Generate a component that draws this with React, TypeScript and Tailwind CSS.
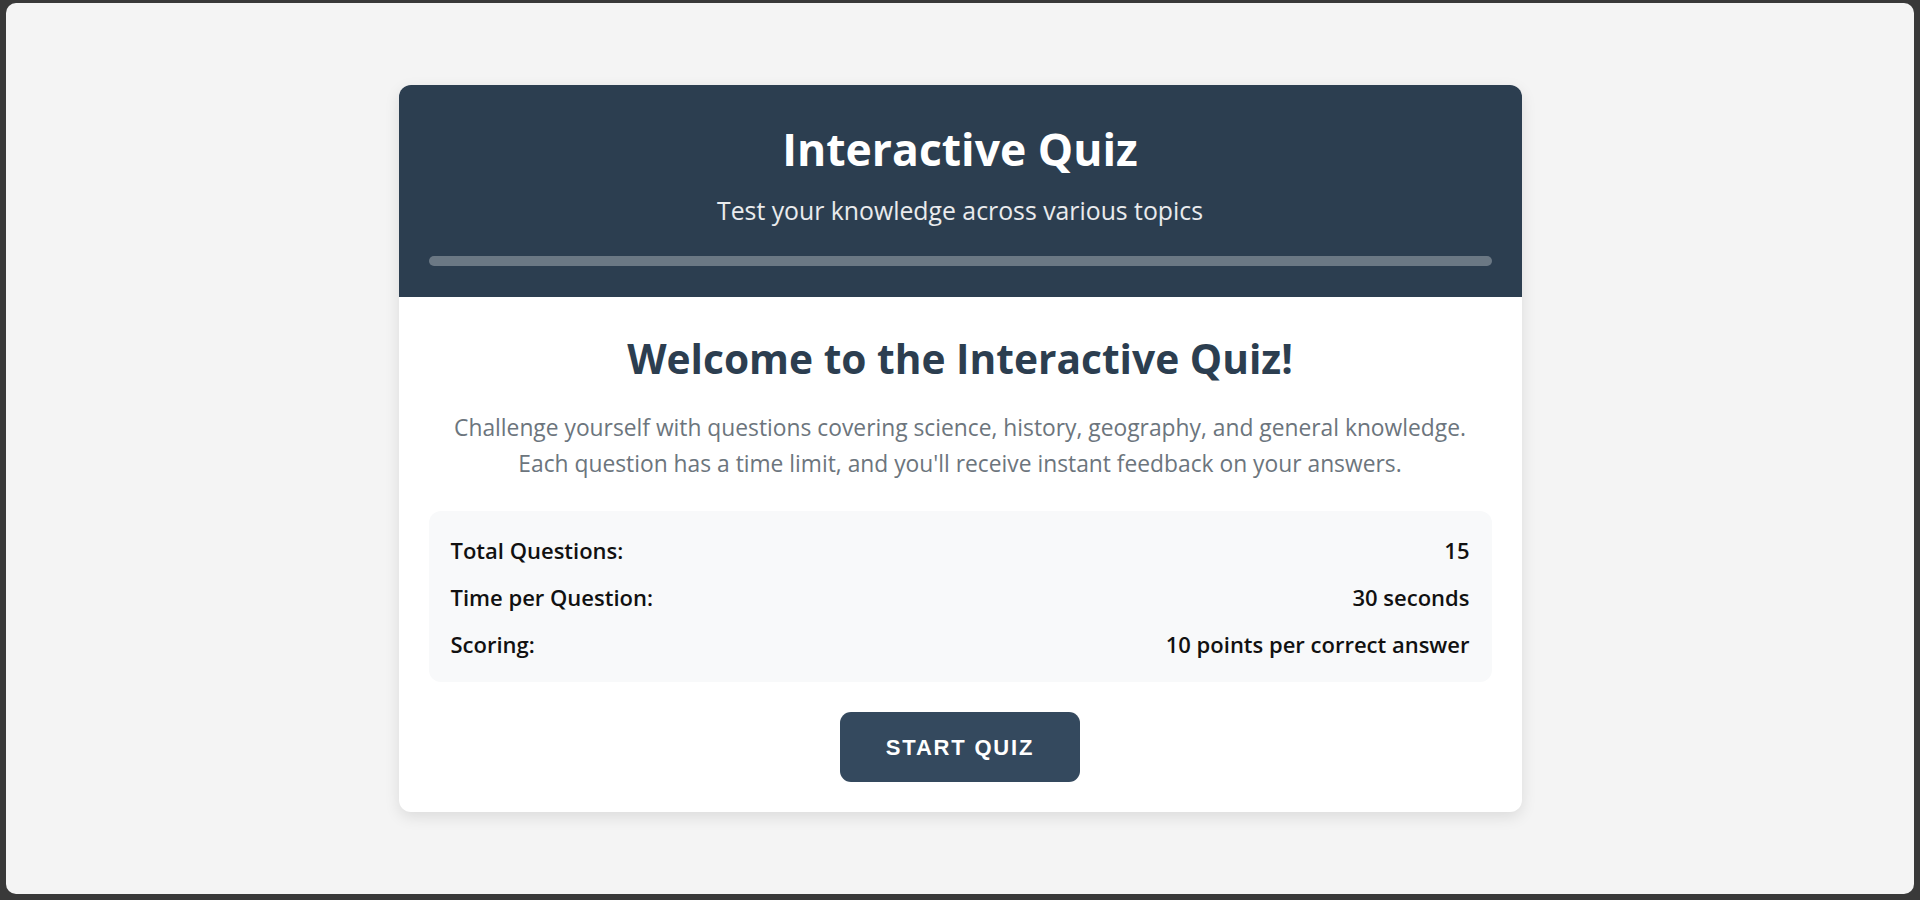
const infoRows = [
  { label: "Total Questions:", value: "15" },
  { label: "Time per Question:", value: "30 seconds" },
  { label: "Scoring:", value: "10 points per correct answer" },
];

export default function App() {
  return (
    <div className="h-[900px] bg-[#393939] pt-[3px] px-[6px] pb-[6px] font-['Open_Sans',sans-serif]">
      <div className="h-full rounded-[10px] bg-[#f4f4f4] flex items-center justify-center">
        <div className="w-[1123px] rounded-[12px] overflow-hidden bg-white shadow-[0_5px_15px_rgba(0,0,0,0.1)]">
          <div className="bg-[#2c3e50] px-[30px] pt-[31px] pb-[31px] text-center">
            <h1 className="text-[44.5px] leading-[66px] font-bold text-white">Interactive Quiz</h1>
            <p className="mt-[13px] text-[24.8px] leading-[30px] text-white/90">
              Test your knowledge across various topics
            </p>
            <div className="mt-[31px] h-[10px] rounded-full bg-white/30" />
          </div>

          <div className="px-[30px] pt-[32px] pb-[30px] flex flex-col items-center">
            <h2 className="text-[40.7px] leading-[58px] font-bold text-[#2c3e50]">
              Welcome to the Interactive Quiz!
            </h2>
            <p className="mt-[23px] text-center text-[22.8px] leading-[36px] text-[#6c757d]">
              Challenge yourself with questions covering science, history, geography, and general knowledge.
              <br />
              Each question has a time limit, and you'll receive instant feedback on your answers.
            </p>

            <div className="mt-[29px] w-full rounded-[12px] bg-[#f8f9fa] px-[22px] pt-[24px] pb-[23px] flex flex-col gap-[17px]">
              {infoRows.map((row) => (
                <div key={row.label} className="flex justify-between text-[22px] leading-[30px] font-semibold text-[#111]">
                  <span>{row.label}</span>
                  <span>{row.value}</span>
                </div>
              ))}
            </div>

            <button
              type="button"
              className="mt-[30px] w-[240px] h-[70px] rounded-[11px] bg-[#34495e] text-white text-[22px] font-bold tracking-[1.8px] font-['Liberation_Sans',Arial,sans-serif]"
            >
              START QUIZ
            </button>
          </div>
        </div>
      </div>
    </div>
  );
}
